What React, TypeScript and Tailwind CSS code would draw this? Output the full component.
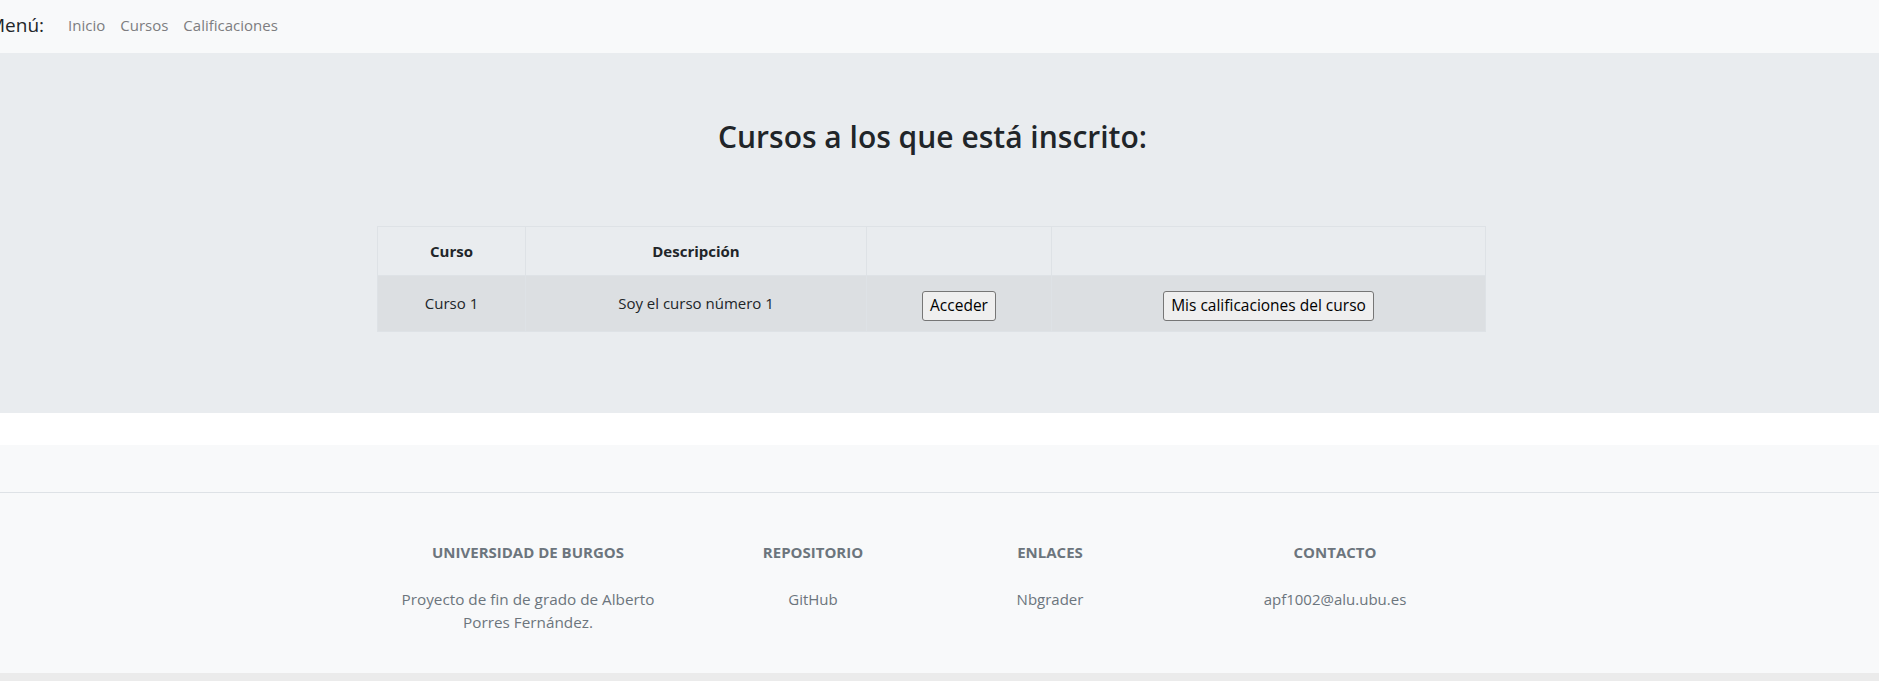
export default function App() {
  return (
    <div className="min-h-[681px] bg-white font-['Open_Sans',sans-serif] text-[#212529]">
      <nav className="h-[53px] bg-[#f8f9fa] flex items-center pb-[3px]">
        <span className="ml-[-12px] text-[19px] text-[#212529]">Menú:</span>
        <div className="ml-[24px] flex gap-[15px] text-[15px] text-[#7d7d80]">
          <a>Inicio</a>
          <a>Cursos</a>
          <a>Calificaciones</a>
        </div>
      </nav>

      <section className="h-[360px] bg-[#e9ecef] pt-[66px]">
        <h2 className="text-center text-[30px] font-semibold leading-[1.2] pr-[14px]">Cursos a los que está inscrito:</h2>
        <table className="mt-[71px] ml-[377px] w-[1109px] border-collapse text-[15px] text-center">
          <thead>
            <tr className="h-[49px] bg-[#e9ecef]">
              <th className="w-[148px] border border-[#dee2e6] font-bold">Curso</th>
              <th className="w-[341px] border border-[#dee2e6] font-bold">Descripción</th>
              <th className="w-[185px] border border-[#dee2e6]"></th>
              <th className="border border-[#dee2e6]"></th>
            </tr>
          </thead>
          <tbody>
            <tr className="h-[56px] bg-[#dcdfe2]">
              <td className="border border-[#dee2e6] pb-[1px]">Curso 1</td>
              <td className="border border-[#dee2e6] pb-[1px]">Soy el curso número 1</td>
              <td className="border border-[#dee2e6] pt-[4px]">
                <button className="border border-[#767676] rounded-[3px] bg-[#efefef] px-[7px] h-[30px] text-[15.5px] text-black">Acceder</button>
              </td>
              <td className="border border-[#dee2e6] pt-[4px]">
                <button className="border border-[#767676] rounded-[3px] bg-[#efefef] px-[7px] h-[30px] text-[15.5px] text-black">Mis calificaciones del curso</button>
              </td>
            </tr>
          </tbody>
        </table>
      </section>

      <div className="h-[32px] bg-white"></div>

      <footer className="bg-[#f8f9fa]">
        <div className="h-[48px] border-b border-[#dee2e6]"></div>
        <div className="h-[180px] pt-[48px] text-[#6c757d]">
          <div className="ml-[398px] flex text-center">
            <div className="w-[260px]">
              <h6 className="text-[15px] font-bold uppercase">Universidad de Burgos</h6>
              <p className="mt-[24px] text-[15.3px] leading-[23px]">Proyecto de fin de grado de Alberto Porres Fernández.</p>
            </div>
            <div className="ml-[55px] w-[200px]">
              <h6 className="text-[15px] font-bold uppercase">Repositorio</h6>
              <p className="mt-[24px] text-[15px] leading-[23px]">GitHub</p>
            </div>
            <div className="ml-[37px] w-[200px]">
              <h6 className="text-[15px] font-bold uppercase">Enlaces</h6>
              <p className="mt-[24px] text-[15px] leading-[23px]">Nbgrader</p>
            </div>
            <div className="ml-[55px] w-[260px]">
              <h6 className="text-[15px] font-bold uppercase">Contacto</h6>
              <p className="mt-[24px] text-[15px] leading-[23px]">apf1002@alu.ubu.es</p>
            </div>
          </div>
        </div>
        <div className="h-[8px] bg-[#ebebeb]"></div>
      </footer>
    </div>
  );
}
